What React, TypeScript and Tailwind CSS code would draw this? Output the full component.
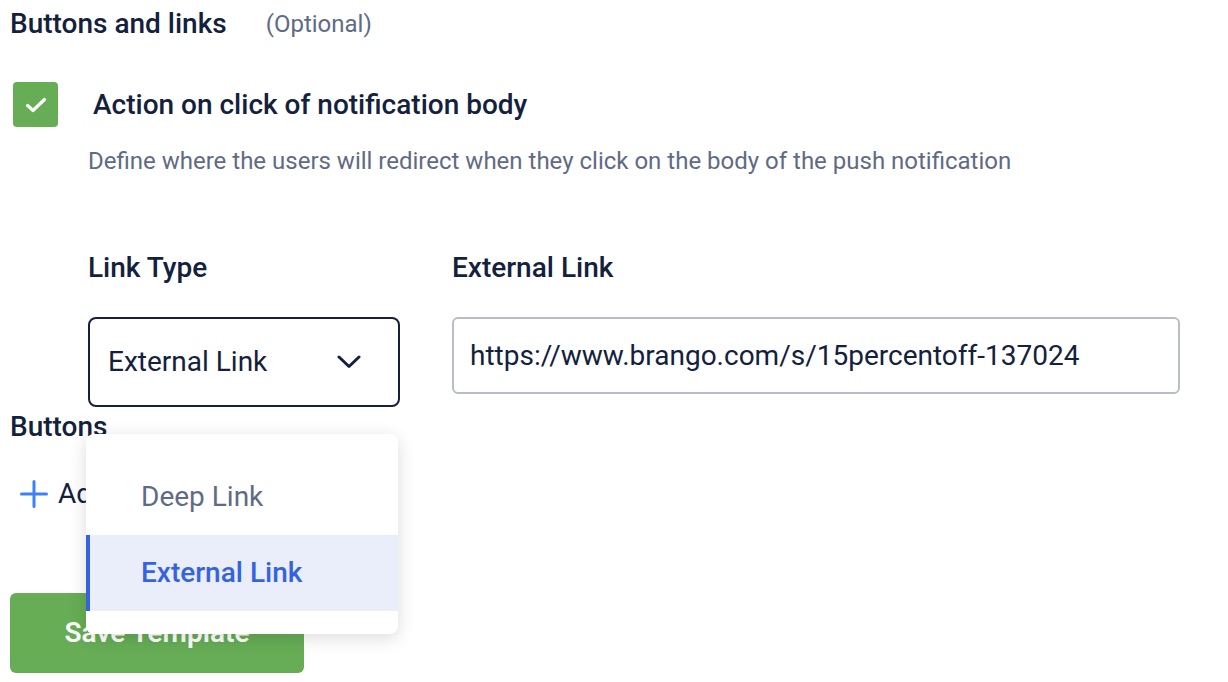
const App = () => {
    return (
        <div className="min-h-[682px] w-[1228px] bg-white pl-[10px] pt-[7px] font-['Roboto',sans-serif] text-[#14213d]">
            <div className="flex items-center h-[34px]">
                <h2 className="text-[28px] font-medium leading-[34px]">Buttons and links</h2>
                <span className="ml-[39px] text-[24px] text-[#5f6b85]">(Optional)</span>
            </div>

            <div className="mt-[41px] flex items-center">
                <div className="ml-[3px] flex h-[45px] w-[45px] items-center justify-center rounded-[4px] bg-[#66ad55]">
                    <svg width="22" height="16" viewBox="0 0 22 16" fill="none">
                        <path d="M2.5 8.5 L8 13.5 L19.5 2.5" stroke="white" strokeWidth="3.2" strokeLinecap="round" strokeLinejoin="round" />
                    </svg>
                </div>
                <span className="ml-[35px] text-[28px] font-medium leading-[34px]">Action on click of notification body</span>
            </div>

            <p className="ml-[78px] mt-[19px] text-[24px] leading-[30px] text-[#5f6b85]">
                Define where the users will redirect when they click on the body of the push notification
            </p>

            <div className="ml-[78px] mt-[75px] flex gap-[52px]">
                <div className="relative w-[312px]">
                    <label className="block text-[28px] font-medium leading-[34px]">Link Type</label>
                    <div className="mt-[32px] flex h-[90px] items-center justify-between rounded-[8px] border-2 border-[#14213d] pl-[18px] pr-[37px]">
                        <span className="text-[28px]">External Link</span>
                        <svg width="24" height="14" viewBox="0 0 24 14" fill="none">
                            <path d="M2 2 L12 11.5 L22 2" stroke="#14213d" strokeWidth="3" strokeLinecap="round" strokeLinejoin="round" />
                        </svg>
                    </div>

                    <div className="absolute left-[-2px] top-[183px] z-10 w-[312px] rounded-[8px] bg-white pt-[24px] pb-[23px] shadow-[0_4px_18px_rgba(0,0,0,0.14)]">
                        <div className="flex h-[77px] items-center pl-[55px] text-[28px] text-[#5f6b85]">Deep Link</div>
                        <div className="flex h-[76px] items-center border-l-4 border-[#3563e0] bg-[#e9eefa] pl-[51px] text-[28px] font-medium text-[#3563e0]">
                            External Link
                        </div>
                    </div>
                </div>

                <div className="w-[728px]">
                    <label className="block text-[28px] font-medium leading-[34px]">External Link</label>
                    <div className="mt-[32px] flex h-[77px] items-center rounded-[6px] border-2 border-[#b9bdc7] pl-[16px]">
                        <span className="text-[28px]">https://www.brango.com/s/15percentoff-137024</span>
                    </div>
                </div>
            </div>

            <h3 className="mt-[3px] text-[28px] font-medium leading-[34px]">Buttons</h3>

            <div className="mt-[33px] flex h-[34px] items-center">
                <svg className="ml-[10px]" width="28" height="28" viewBox="0 0 28 28" fill="none">
                    <path d="M14 1.5 V26.5 M1.5 14 H26.5" stroke="#3b82f6" strokeWidth="3" strokeLinecap="round" />
                </svg>
                <span className="ml-[10px] text-[28px] leading-[34px]">Add button</span>
            </div>

            <button className="mt-[82px] flex h-[80px] w-[294px] items-center justify-center rounded-[6px] bg-[#66ad55] text-[28px] font-semibold text-white">
                Save Template
            </button>
        </div>
    )
}

export default App
